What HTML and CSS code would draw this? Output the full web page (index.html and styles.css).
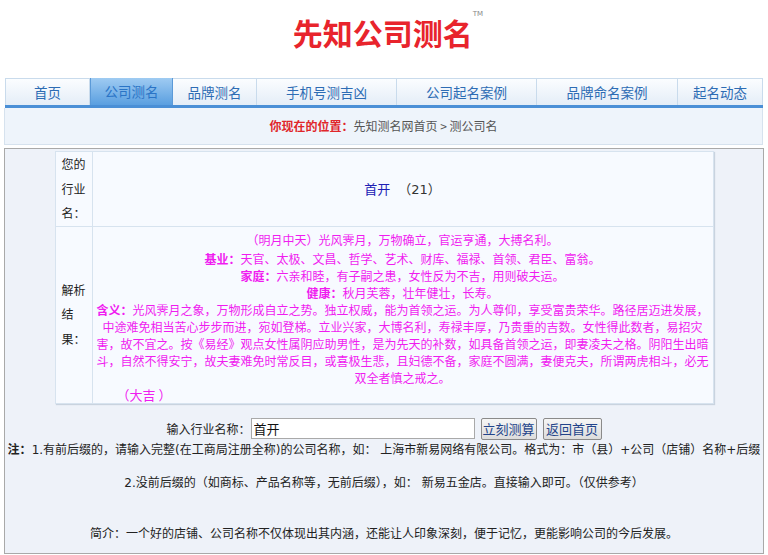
FILE: index.html
```html
<!DOCTYPE html>
<html lang="zh-CN">
<head>
<meta charset="utf-8">
<title>先知公司测名</title>
<link rel="stylesheet" href="styles.css">
</head>
<body>
<div class="header">
  <h1 class="logo">先知公司测名<sup class="tm">TM</sup></h1>
</div>
<ul class="nav">
  <li class="w85">首页</li>
  <li class="w83 active">公司测名</li>
  <li class="w84">品牌测名</li>
  <li class="w140">手机号测吉凶</li>
  <li class="w140">公司起名案例</li>
  <li class="w141">品牌命名案例</li>
  <li class="w85 last">起名动态</li>
</ul>
<div class="crumb"><b>你现在的位置：</b>先知测名网首页 &gt; 测公司名</div>
<div class="main">
  <table class="result">
    <tr class="row1">
      <th>您的行业名：</th>
      <td><span class="name">首开</span> <span class="num">（21）</span></td>
    </tr>
    <tr class="row2">
      <th>解析结果：</th>
      <td>
        <p class="first">（明月中天）光风霁月，万物确立，官运亨通，大搏名利。</p>
        <p><b>基业：</b>天官、太极、文昌、哲学、艺术、财库、福禄、首领、君臣、富翁。</p>
        <p><b>家庭：</b>六亲和睦，有子嗣之患，女性反为不吉，用则破夫运。</p>
        <p><b>健康：</b>秋月芙蓉，壮年健壮，长寿。</p>
        <p><b>含义：</b>光风霁月之象，万物形成自立之势。独立权威，能为首领之运。为人尊仰，享受富贵荣华。路径居迈进发展，中途难免相当苦心步步而进，宛如登梯。立业兴家，大博名利，寿禄丰厚，乃贵重的吉数。女性得此数者，易招灾害，故不宜之。按《易经》观点女性属阴应助男性，是为先天的补数，如具备首领之运，即妻凌夫之格。阴阳生出暗斗，自然不得安宁，故夫妻难免时常反目，或喜极生悲，且妇德不备，家庭不圆满，妻便克夫，所谓两虎相斗，必无双全者慎之戒之。</p>
        <p class="luck">（大吉 ）</p>
      </td>
    </tr>
  </table>
  <form class="query">
    <label>输入行业名称：</label><input class="field" type="text" value="首开"><button type="button" class="btn">立刻测算</button><button type="button" class="btn">返回首页</button>
  </form>
  <p class="note"><b>注：</b>1.有前后缀的，请输入完整(在工商局注册全称)的公司名称，如： 上海市新易网络有限公司。格式为：市（县）+公司（店铺）名称+后缀</p>
  <p class="note2">2.没前后缀的（如商标、产品名称等，无前后缀），如： 新易五金店。直接输入即可。（仅供参考）</p>
  <p class="intro">简介：一个好的店铺、公司名称不仅体现出其内涵，还能让人印象深刻，便于记忆，更能影响公司的今后发展。</p>
</div>
</body>
</html>
```
FILE: styles.css
```css
html, body {
  margin: 0;
  padding: 0;
  background: #fff;
}
body {
  font-family: "DejaVu Sans", "Noto Sans CJK SC", sans-serif;
  font-size: 12px;
  color: #333;
}
.header {
  height: 78px;
  text-align: center;
}
.logo {
  margin: 0;
  padding-top: 12px;
  font-family: "Noto Sans CJK SC", sans-serif;
  font-size: 30px;
  line-height: 40px;
  font-weight: bold;
  color: #e8242c;
  position: relative;
  left: 4px;
}
.tm {
  font-family: "DejaVu Sans", sans-serif;
  font-size: 7px;
  line-height: 7px;
  font-weight: normal;
  color: #888;
  vertical-align: top;
  position: relative;
  top: -1px;
  margin-left: 0;
}
.nav {
  list-style: none;
  margin: 0 5px 0 5px;
  padding: 0;
  display: flex;
  height: 26px;
  border-top: 1px solid #c9dbec;
  border-bottom: 3px solid #4a8fd6;
  background: linear-gradient(#fbfdff, #e4edf7);
}
.nav li {
  box-sizing: border-box;
  height: 26px;
  line-height: 26px;
  text-align: center;
  font-family: "Noto Sans CJK SC", sans-serif;
  font-size: 13.5px;
  color: #2d6cb4;
  border-right: 1px solid #c9dbec;
}
.nav li:first-child { border-left: 1px solid #c9dbec; }
.nav li.active {
  background: linear-gradient(#9fcbf2, #5a9fe0);
  color: #2a74c6;
  border-left: 1px solid #5b9ad8;
  border-right: 1px solid #5b9ad8;
  margin-top: -1px;
  height: 27px;
  line-height: 27px;
}
.w83 { width: 83px; }
.w84 { width: 84px; }
.w85 { width: 85px; }
.w140 { width: 140px; }
.w141 { width: 141px; }
.crumb {
  margin: 0 5px 0 4px;
  height: 36px;
  line-height: 36px;
  border: 1px solid #d6e2ee;
  border-top: none;
  background: #eef4fb;
  text-align: center;
  font-family: "Noto Sans CJK SC", sans-serif;
  color: #555;
}
.crumb b { color: #e0262a; }
.main {
  margin: 3px 4px 0 4px;
  border: 1px solid #a9a9a9;
  background: #eef2f9;
  padding: 2px 0 10px;
  text-align: center;
  font-family: "DejaVu Sans", "Noto Sans CJK SC", sans-serif;
}
.result {
  width: 659px;
  margin: 0 auto;
  border-collapse: collapse;
  table-layout: fixed;
  background: #f7faff;
  box-shadow: 1px 1px 1px #c9d3df;
}
.result th, .result td {
  border: 1px solid #d7e3ef;
}
.result th {
  width: 24px;
  padding: 0 6px;
  font-weight: normal;
  color: #222;
  line-height: 24.5px;
  text-align: left;
  font-family: "Noto Sans CJK SC", sans-serif;
}
.row1 th { height: 71px; }
.row1 td {
  text-align: center;
  font-size: 13px;
}
.name { color: #2020b4; font-family: "Noto Sans CJK SC", sans-serif; }
.num { color: #333; margin-left: 4px; }
.row2 td {
  color: #f01cf0;
  padding: 4px 2px 0 2px;
  text-align: center;
  line-height: 17px;
  font-family: "Noto Sans CJK SC", sans-serif;
}
.row2 p { margin: 0; }
.row2 p.first { margin-bottom: 2px; }
.row2 b { font-weight: bold; }
.row2 p.luck {
  text-align: left;
  padding-left: 22px;
  font-size: 13px;
  line-height: 17px;
}
.query {
  margin: 14px 0 0 0;
  height: 22px;
  display: flex;
  justify-content: center;
  align-items: center;
  font-family: "Noto Sans CJK SC", sans-serif;
  color: #222;
}
.field {
  box-sizing: border-box;
  width: 224px;
  height: 21px;
  border: 1px solid #a9a9a9;
  padding: 0 2px;
  font-family: "Noto Sans CJK SC", sans-serif;
  font-size: 13px;
  color: #111;
  background: #fff;
  margin: 0 6px 0 0;
}
.btn {
  box-sizing: border-box;
  width: 56px;
  height: 22px;
  padding: 0;
  border: 1px solid #8a8a8a;
  border-radius: 2px;
  background: linear-gradient(#f6f6f6, #dcdcdc);
  font-family: "Noto Sans CJK SC", sans-serif;
  font-size: 13px;
  color: #23448a;
  margin-right: 6px;
}
.btn:last-child { margin-right: 0; width: 59px; }
.note, .note2, .intro {
  margin: 0;
  line-height: 17px;
  color: #222;
  white-space: nowrap;
}
.note { margin-top: 2px; }
.note2 { margin-top: 16px; }
.intro { margin-top: 34px; }
```
